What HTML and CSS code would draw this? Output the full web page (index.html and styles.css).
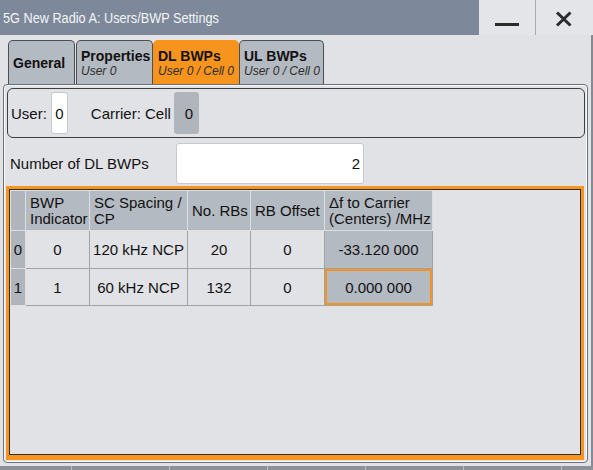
FILE: index.html
```
<!DOCTYPE html>
<html>
<head>
<meta charset="utf-8">
<link rel="stylesheet" href="styles.css">
</head>
<body>
<div class="window">
  <header class="titlebar">
    <div class="title"><span class="title-text">5G New Radio A: Users/BWP Settings</span></div>
    <div class="btn btn-min"><svg width="56" height="35" viewBox="0 0 56 35"><rect x="16" y="23" width="24" height="3" fill="#2b2b2b"/></svg></div>
    <div class="btn btn-close"><svg width="57" height="35" viewBox="0 0 57 35"><path d="M21 12.5 L34.5 25.5 M34.5 12.5 L21 25.5" stroke="#2b2b2b" stroke-width="3" fill="none"/></svg></div>
  </header>
  <main class="content">
    <nav class="tabs">
      <div class="tab tab-general"><span class="tab-title">General</span></div>
      <div class="tab tab-props"><span class="tab-title">Properties</span><span class="tab-sub">User 0</span></div>
      <div class="tab tab-dl active"><span class="tab-title">DL BWPs</span><span class="tab-sub">User 0 / Cell 0</span></div>
      <div class="tab tab-ul"><span class="tab-title">UL BWPs</span><span class="tab-sub">User 0 / Cell 0</span></div>
    </nav>
    <section class="panel">
      <div class="group">
        <span class="lbl">User:</span><span class="field field-user">0</span>
        <span class="lbl lbl-carrier">Carrier: Cell</span><span class="field field-ro">0</span>
      </div>
      <div class="numrow">
        <span class="lbl lbl-num">Number of DL BWPs</span><span class="field field-num">2</span>
      </div>
      <div class="tableframe">
        <table class="grid">
          <colgroup>
            <col class="c-rh"><col class="c-ind"><col class="c-sc"><col class="c-rb"><col class="c-off"><col class="c-df">
          </colgroup>
          <thead>
            <tr>
              <th class="rh"></th>
              <th>BWP<br>Indicator</th>
              <th>SC Spacing /<br>CP</th>
              <th>No. RBs</th>
              <th>RB Offset</th>
              <th>Δf to Carrier<br>(Centers) /MHz</th>
            </tr>
          </thead>
          <tbody>
            <tr class="r0">
              <td class="rh">0</td>
              <td>0</td>
              <td>120 kHz NCP</td>
              <td>20</td>
              <td>0</td>
              <td class="ro">-33.120 000</td>
            </tr>
            <tr class="r1">
              <td class="rh">1</td>
              <td>1</td>
              <td>60 kHz NCP</td>
              <td>132</td>
              <td>0</td>
              <td class="ro sel">0.000 000</td>
            </tr>
          </tbody>
        </table>
      </div>
    </section>
    <div class="strip"><span class="seg seg-first"></span><span class="seg"></span><span class="seg"></span><span class="seg"></span><span class="seg"></span><span class="seg"></span><span class="seg seg-last"></span></div>
  </main>
</div>
</body>
</html>
```
FILE: styles.css
```
* { box-sizing: border-box; }
html, body { margin: 0; padding: 0; }
body {
  width: 593px;
  height: 470px;
  overflow: hidden;
  background: #e1e2e6;
  font-family: "Liberation Sans", Arial, sans-serif;
  font-size: 15px;
  color: #111;
}
.window { display: flex; flex-direction: column; width: 593px; height: 470px; overflow: hidden; }

.titlebar { display: flex; height: 35px; background: #7d889a; flex: none; }
.title {
  flex: 1;
  padding-left: 3px;
  line-height: 36px;
  color: #f4f5f7;
  font-size: 15.5px;
  overflow: hidden;
  white-space: nowrap;
}
.title-text { display: inline-block; transform: scaleX(0.82); transform-origin: left center; }
.btn { background: #e4e5e9; height: 35px; }
.btn svg { display: block; }
.btn-min { width: 56px; }
.btn-close { width: 58px; border-left: 1px solid #a7abb1; }

.content {
  flex: 1;
  display: flex;
  flex-direction: column;
  padding-left: 3px;
  border-right: 2px solid #868b93;
}

.tabs { display: flex; height: 44px; margin-top: 5px; padding-left: 5px; flex: none; }
.tab {
  display: flex;
  flex-direction: column;
  justify-content: center;
  padding-left: 4px;
  background: #b4bac1;
  border: 1px solid #4c4e52;
  border-bottom: none;
  border-radius: 5px 5px 0 0;
}
.tab-title { font-weight: bold; font-size: 14px; line-height: 16px; }
.tab-sub { font-style: italic; font-size: 12px; line-height: 14px; color: #2e2e2e; }
.tab-general { width: 67px; margin-right: 1px; }
.tab-props { width: 77px; }
.tab-dl { width: 86px; }
.tab-ul { width: 85px; }
.tab.active { background: #f7941e; border-color: #f7941e; }

.panel {
  width: 585px;
  height: 379px;
  flex: none;
  border: 1px solid #6c7179;
  border-radius: 4px;
  box-shadow: inset 0 0 0 1px #f7f8fa;
  display: flex;
  flex-direction: column;
}

.group {
  margin: 3px 2px 0 3px;
  height: 50px;
  border: 1px solid #3e3f42;
  border-radius: 6px;
  display: flex;
  align-items: center;
  padding-left: 3px;
}
.lbl { white-space: nowrap; }
.field {
  display: flex;
  align-items: center;
  justify-content: center;
  height: 42px;
  border-radius: 3px;
}
.field-user { width: 17px; margin-left: 4px; background: #fff; border: 1px solid #c5c8cd; }
.lbl-carrier { margin-left: 23px; }
.field-ro { width: 25px; margin-left: 3px; background: #b0b5bc; padding-left: 5px; }

.numrow { display: flex; align-items: center; margin: 5px 0 0 6px; height: 41px; flex: none; }
.lbl-num { width: 166px; }
.field-num {
  width: 188px;
  height: 41px;
  background: #fff;
  border: 1px solid #c5c8cd;
  justify-content: flex-end;
  padding-right: 3px;
}

.tableframe {
  margin: 2px 0 0 2px;
  width: 578px;
  height: 274px;
  flex: none;
  border: 3px solid #f7941e;
  border-bottom-width: 5px;
  box-shadow: inset 0 0 0 1px #2f3033;
  padding: 2px;
}

.grid {
  border-collapse: separate;
  border-spacing: 0;
  table-layout: fixed;
  width: 422px;
}
.c-rh { width: 15px; }
.c-ind { width: 64px; }
.c-sc { width: 98px; }
.c-rb { width: 63px; }
.c-off { width: 74px; }
.c-df { width: 108px; }

.grid th {
  height: 40px;
  background: #b4bac1;
  font-weight: normal;
  text-align: left;
  vertical-align: middle;
  line-height: 16px;
  padding: 0 0 0 4px;
  border-right: 1px solid #dcdee2;
  border-bottom: 1px solid #dcdee2;
  white-space: nowrap;
}
.grid td {
  text-align: center;
  vertical-align: middle;
  padding: 0;
  border-right: 1px solid #9ea3aa;
  border-bottom: 1px solid #9ea3aa;
  white-space: nowrap;
}
.grid .r0 td { height: 38px; }
.grid .r1 td { height: 37px; }
.grid td.rh, .grid th.rh {
  background: #b0b5bc;
  padding: 0;
  border-right: 1px solid #dcdee2;
  border-bottom: 1px solid #dcdee2;
  text-align: center;
}
.grid td.ro { background: #b4bac1; }
.grid td.sel { box-shadow: inset 0 0 0 2px #f7941e; }

.strip {
  display: flex;
  margin-top: 3px;
  margin-left: -3px;
  margin-right: -2px;
  height: 4px;
  flex: none;
  overflow: hidden;
  background: #8b9199;
}
.seg { width: 98px; flex: none; border-left: 1px solid #b7bcc2; }
.seg-first { width: 71px; border-left: none; }
.seg-last { width: 31px; }
```
